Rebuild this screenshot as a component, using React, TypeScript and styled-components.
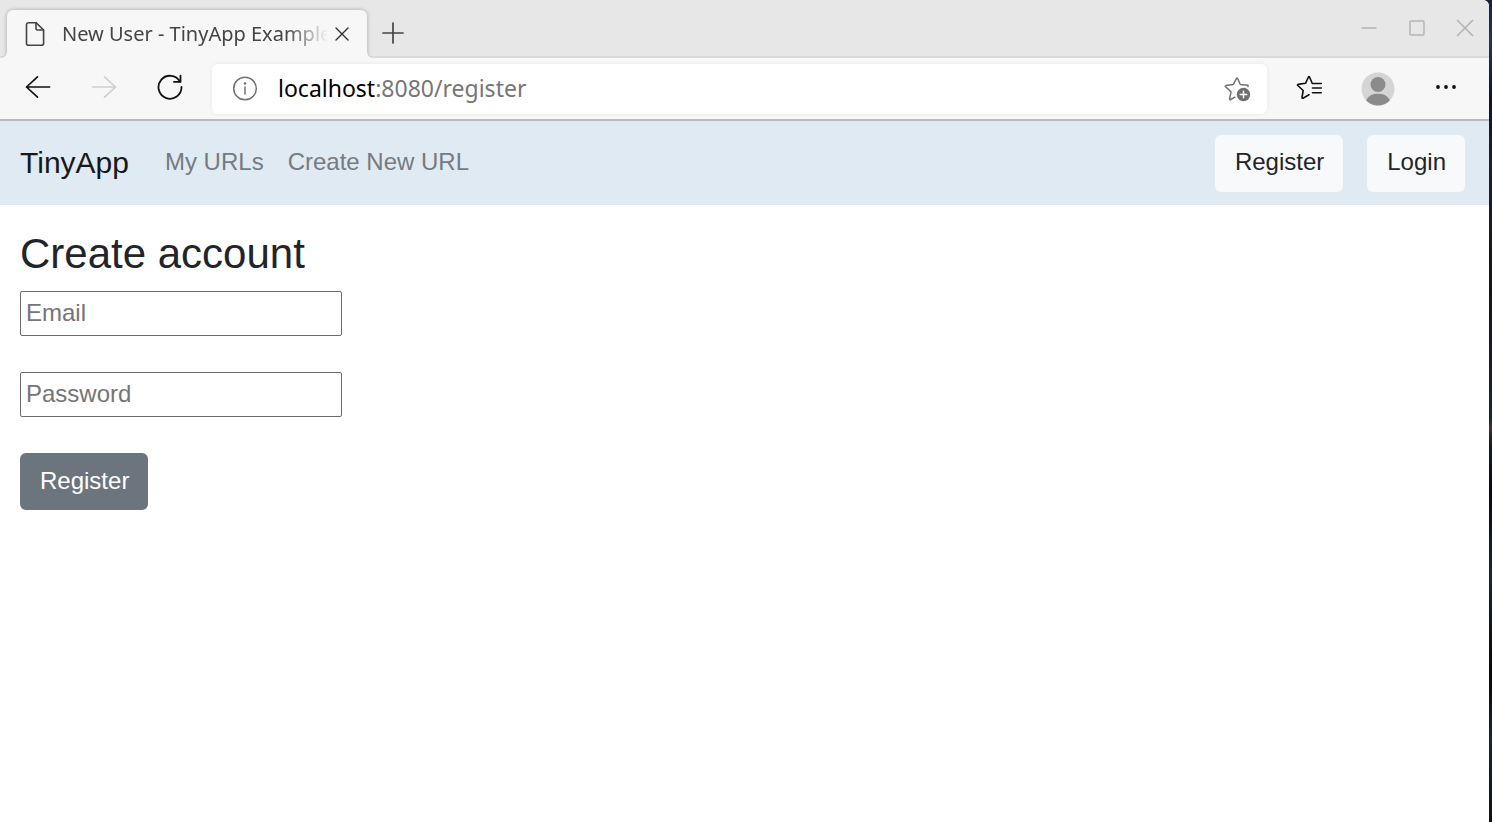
import React from "react";
import styled, { createGlobalStyle } from "styled-components";

const GlobalStyle = createGlobalStyle`
  *, *::before, *::after { box-sizing: border-box; }
  body { margin: 0; font-family: "Liberation Sans", Arial, sans-serif; color: #212529; }
  button, input { font-family: inherit; }
`;

const Desktop = styled.div`
  display: flex;
  min-height: 100vh;
  padding-right: 3px;
  background: linear-gradient(#16223f 0%, #24335c 5%, #0d1428 12%, #1c2030 20%, #10151f 35%, #1a2434 51%, #4a342c 52%, #101c2b 54%, #080b12 60%, #152637 70%, #05080d 82%, #142536 90%, #0b1119 100%);
`;

const BrowserWindow = styled.div`
  flex: 1;
  min-width: 0;
  display: flex;
  flex-direction: column;
  background: #fff;
  border-top-right-radius: 6px;
  overflow: hidden;
`;

const TabStrip = styled.div`
  display: flex;
  align-items: flex-end;
  height: 58px;
  padding-left: 7px;
  background: #e7e7e7;
  box-shadow: inset 0 -2px 0 #dadada;
`;

const Tab = styled.div`
  position: relative;
  display: flex;
  align-items: center;
  width: 360px;
  height: 48px;
  padding: 0 16px;
  border-radius: 6px 6px 0 0;
  background: #f7f7f7;
  box-shadow: 0 0 4px rgba(0, 0, 0, 0.28);
  color: #444;

  &::before,
  &::after {
    content: "";
    position: absolute;
    bottom: 0;
    width: 5px;
    height: 5px;
  }
  &::before {
    right: 100%;
    background: radial-gradient(circle at 0 0, transparent 3px, #cecece 4px, #f7f7f7 5px);
  }
  &::after {
    left: 100%;
    background: radial-gradient(circle at 100% 0, transparent 3px, #cecece 4px, #f7f7f7 5px);
  }
`;

const TabTitle = styled.span`
  flex: 1;
  min-width: 0;
  margin-left: 15px;
  overflow: hidden;
  white-space: nowrap;
  font: 20px/28px "Noto Sans", sans-serif;
  mask-image: linear-gradient(to right, #000 224px, transparent 266px);
`;

const IconButton = styled.button<{ $width: number; $height?: number; $color?: string }>`
  display: flex;
  align-items: center;
  justify-content: center;
  flex: none;
  width: ${(p) => p.$width}px;
  height: ${(p) => p.$height ?? 50}px;
  padding: 0;
  border: 0;
  background: none;
  color: ${(p) => p.$color ?? "#111"};
`;

const ToolbarButton = styled(IconButton)`
  padding-bottom: 3px;
`;

const WindowControls = styled.div`
  display: flex;
  align-self: flex-start;
  margin-left: auto;
`;

const Toolbar = styled.div`
  position: relative;
  display: flex;
  align-items: center;
  height: 63px;
  padding: 0 10px 0 5px;
  background: #f7f7f7;
  border-bottom: 2px solid #b6babe;
`;

const AddressBar = styled.div`
  display: flex;
  align-items: center;
  flex: 1;
  min-width: 0;
  height: 50px;
  margin: 0 9px;
  border-radius: 6px;
  background: #fff;
  box-shadow: 0 0 4px rgba(0, 0, 0, 0.07);
`;

const Address = styled.span`
  flex: 1;
  min-width: 0;
  padding-bottom: 2px;
  overflow: hidden;
  white-space: nowrap;
  font: 23px/32px "Noto Sans", sans-serif;
  color: #767676;
`;

const Host = styled.span`
  color: #000;
`;

const SiteHeader = styled.header`
  display: flex;
  align-items: center;
  height: 84px;
  padding: 0 24px 0 20px;
  background: #e0eaf2;
`;

const Brand = styled.a`
  margin-right: 36px;
  font-size: 30px;
  line-height: 44px;
  color: #16191c;
  text-decoration: none;
`;

const Nav = styled.nav`
  display: flex;
  flex: 1;
  gap: 24px;
  padding-bottom: 2px;
`;

const NavLink = styled.a`
  font-size: 24px;
  line-height: 36px;
  color: #757b80;
  text-decoration: none;
`;

const Actions = styled.div`
  display: flex;
  gap: 24px;
`;

const Button = styled.button<{ $dark?: boolean }>`
  height: 57px;
  padding: 0 19px 2px 20px;
  border: 0;
  border-radius: 6px;
  font-size: 24px;
  line-height: 36px;
  background: ${(p) => (p.$dark ? "#6c757d" : "#f8f9fa")};
  color: ${(p) => (p.$dark ? "#fff" : "#212529")};
`;

const Main = styled.main`
  padding: 24px 20px;
`;

const Title = styled.h1`
  margin: 0 0 12px;
  font-size: 42px;
  line-height: 50px;
  font-weight: 400;
`;

const Form = styled.form`
  display: flex;
  flex-direction: column;
  align-items: flex-start;
  gap: 36px;
`;

const Field = styled.input`
  width: 322px;
  height: 45px;
  padding: 0 5px 2px;
  border: 1px solid #6b6b6f;
  border-radius: 2px;
  background: #fff;
  font-size: 24px;
  line-height: 36px;
  &::placeholder { color: #757575; opacity: 1; }
`;

const stroke = {
  fill: "none",
  stroke: "currentColor",
  strokeLinecap: "round" as const,
  strokeLinejoin: "round" as const,
};

const PageIcon = () => (
  <svg width="24" height="28" viewBox="0 0 24 28" {...stroke} strokeWidth="1.6">
    <path d="M5.500 2.700H13L20.600 10V23.200a2 2 0 0 1-2 2H5.500a2 2 0 0 1-2-2V4.700a2 2 0 0 1 2-2z" />
    <path d="M13 2.900V8.500a1.500 1.500 0 0 0 1.500 1.500H20.400" />
  </svg>
);

const ArrowIcon = ({ forward }: { forward?: boolean }) => (
  <svg width="28" height="28" viewBox="0 0 28 28" {...stroke} strokeWidth="1.7">
    {forward ? <path d="M2.500 14H25.500M14.500 3.800L25.500 14L14.500 24.200" /> : <path d="M25.500 14H2.500M13.500 3.800L2.500 14L13.500 24.200" />}
  </svg>
);

const ReloadIcon = () => (
  <svg width="28" height="28" viewBox="0 0 28 28" {...stroke} strokeWidth="1.8">
    <path d="M24 8.600A11.500 11.500 0 1 0 25.500 14" />
    <path d="M24.500 2.600V8.900H18" />
  </svg>
);

const InfoIcon = () => (
  <svg width="26" height="26" viewBox="0 0 26 26" {...stroke} strokeWidth="1.5">
    <circle cx="13" cy="12.500" r="11.300" />
    <path d="M13 11V18" />
    <circle cx="13" cy="7.500" r="0.600" fill="currentColor" />
  </svg>
);

const AddFavoriteIcon = () => (
  <svg width="28" height="28" viewBox="0 0 28 28" {...stroke} strokeWidth="1.5">
    <path d="M25 11.500V10.300L17.300 9.500L14.500 3.300Q14 2.500 13.500 3.300L10.300 9.500L2.800 10.600Q1.800 10.900 2.600 11.700L8 16.800L6.600 23.900Q6.600 25 7.600 24.500L11.800 22.200" />
    <circle cx="20.500" cy="19.500" r="6.700" fill="currentColor" stroke="none" />
    <path d="M20.500 16.200V22.800M17.200 19.500H23.800" stroke="#fff" />
  </svg>
);

const FavoritesIcon = () => (
  <svg width="28" height="28" viewBox="0 0 28 28" {...stroke} strokeWidth="1.600">
    <path d="M25.300 10.500H16.300L13.500 4Q13 3.200 12.500 4L9.500 10.300L2 11.400Q1 11.700 1.800 12.500L7.200 17.500L6 24.500Q6 25.600 7 25.200L13 21.800" />
    <path d="M16.500 15H25.300M16.500 19.700H25.300" />
  </svg>
);

const AvatarIcon = () => (
  <svg width="34" height="34" viewBox="0 0 34 34">
    <circle cx="17" cy="17" r="16.500" fill="#d5d5d5" />
    <circle cx="17" cy="12.500" r="7.500" fill="#8b8b8b" />
    <path d="M5.200 28.500C7 23.500 12 21.700 17 21.700S27 23.500 28.800 28.500A16.500 16.500 0 0 1 5.200 28.500z" fill="#8b8b8b" />
  </svg>
);

const MoreIcon = () => (
  <svg width="22" height="6" viewBox="0 0 22 6" fill="currentColor">
    <circle cx="3" cy="3" r="1.900" />
    <circle cx="11" cy="3" r="1.900" />
    <circle cx="19" cy="3" r="1.900" />
  </svg>
);

const CrossIcon = ({ size }: { size: number }) => (
  <svg width={size} height={size} viewBox="0 0 16 16" {...stroke} strokeWidth="1.400">
    <path d="M2 2L14 14M14 2L2 14" />
  </svg>
);

const PlusIcon = () => (
  <svg width="24" height="24" viewBox="0 0 24 24" {...stroke} strokeWidth="1.700">
    <path d="M12 2V22M2 12H22" />
  </svg>
);

const MinimizeIcon = () => (
  <svg width="18" height="18" viewBox="0 0 18 18" {...stroke} strokeWidth="1.500">
    <path d="M2 9H16" />
  </svg>
);

const MaximizeIcon = () => (
  <svg width="18" height="18" viewBox="0 0 18 18" {...stroke} strokeWidth="1.500">
    <rect x="2" y="2" width="14" height="14" rx="1" />
  </svg>
);

export default function App() {
  return (
    <Desktop>
      <GlobalStyle />
      <BrowserWindow>
        <TabStrip>
          <Tab>
            <PageIcon />
            <TabTitle>New User - TinyApp Example</TabTitle>
            <IconButton $width={18} $height={32} $color="#333" aria-label="Close tab"><CrossIcon size={16} /></IconButton>
          </Tab>
          <IconButton $width={52} $color="#444" aria-label="New tab"><PlusIcon /></IconButton>
          <WindowControls>
            <IconButton $width={48} $height={56} $color="#b5b5b5" aria-label="Minimize"><MinimizeIcon /></IconButton>
            <IconButton $width={48} $height={56} $color="#b5b5b5" aria-label="Maximize"><MaximizeIcon /></IconButton>
            <IconButton $width={48} $height={56} $color="#b5b5b5" aria-label="Close window"><CrossIcon size={20} /></IconButton>
          </WindowControls>
        </TabStrip>
        <Toolbar>
          <ToolbarButton $width={66} aria-label="Back"><ArrowIcon /></ToolbarButton>
          <ToolbarButton $width={66} $color="#cfcfcf" aria-label="Forward"><ArrowIcon forward /></ToolbarButton>
          <ToolbarButton $width={66} aria-label="Reload"><ReloadIcon /></ToolbarButton>
          <AddressBar>
            <IconButton $width={66} $color="#707070" aria-label="Site information"><InfoIcon /></IconButton>
            <Address><Host>localhost</Host>:8080/register</Address>
            <IconButton $width={60} $color="#707070" aria-label="Add to favorites"><AddFavoriteIcon /></IconButton>
          </AddressBar>
          <ToolbarButton $width={67} aria-label="Favorites"><FavoritesIcon /></ToolbarButton>
          <IconButton $width={70} aria-label="Profile"><AvatarIcon /></IconButton>
          <ToolbarButton $width={66} aria-label="Settings and more"><MoreIcon /></ToolbarButton>
        </Toolbar>
        <SiteHeader>
          <Brand href="#">TinyApp</Brand>
          <Nav>
            <NavLink href="#">My URLs</NavLink>
            <NavLink href="#">Create New URL</NavLink>
          </Nav>
          <Actions>
            <Button type="button">Register</Button>
            <Button type="button">Login</Button>
          </Actions>
        </SiteHeader>
        <Main>
          <Title>Create account</Title>
          <Form>
            <Field type="email" placeholder="Email" aria-label="Email" />
            <Field type="password" placeholder="Password" aria-label="Password" />
            <Button type="button" $dark>Register</Button>
          </Form>
        </Main>
      </BrowserWindow>
    </Desktop>
  );
}
